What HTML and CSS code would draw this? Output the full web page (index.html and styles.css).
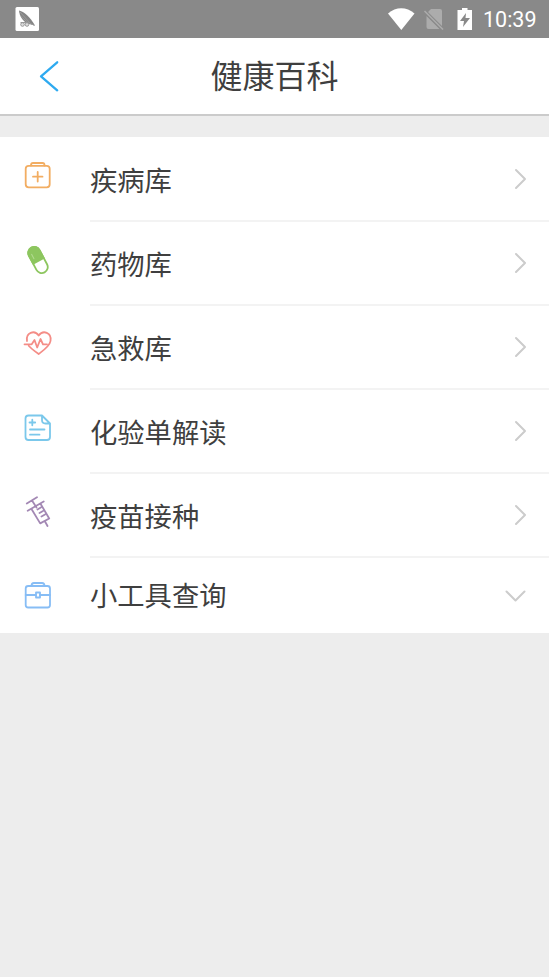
FILE: index.html
```html
<!DOCTYPE html>
<html lang="zh-CN">
<head>
<meta charset="utf-8">
<meta name="viewport" content="width=device-width, initial-scale=1">
<title>健康百科</title>
<link rel="stylesheet" href="styles.css">
</head>
<body>
<div class="status">
  <svg class="app-icon" width="24" height="24" viewBox="0 0 24 24"><rect x=".5" width="23.500" height="24" rx="1.500" fill="#fff"/><path d="M4 3.500C10 5 15 10 20 18.500L12 16.500C7 13 4.500 9 4 3.500Z" fill="#858585"/><path d="M5 5l10 11M5.500 9l8 7" stroke="#aaa" stroke-width=".6"/><g fill="#ddd" stroke="#999" stroke-width="1"><circle cx="7.500" cy="17.500" r="1.800"/><circle cx="12" cy="17.500" r="1.800"/><path d="M5.500 15.500h8l6 3" fill="none"/></g></svg>
  <div class="indicators">
    <svg width="92" height="38" viewBox="0 0 92 38">
      <path d="M0 13.500C8 6.500 18.500 6.500 26.500 13.500L13.300 30Z" fill="#fff"/>
      <path d="M43 9h9q2 0 2 2v15L40 12ZM38.500 16L51.500 29H40.500q-2 0-2-2Z" fill="#acacac"/>
      <path d="M36.500 11L55 29.500" stroke="#acacac" stroke-width="1.600"/>
      <path fill-rule="evenodd" d="M74 8H79.500v2h4.500v20H69.500V10h4.500ZM78 13L72 21H76L75 27L82 18H77.500Z" fill="#fff"/>
    </svg>
    <span class="clock">10:39</span>
  </div>
</div>
<header class="header">
  <svg class="back" width="24" height="34" viewBox="0 0 24 34"><path d="M20.200 3.300L4 17.300L20.200 31.300" fill="none" stroke="#2eaaf0" stroke-width="2.300" stroke-linecap="round" stroke-linejoin="round"/></svg>
  <h1>健康百科</h1>
</header>
<main class="list">
  <div class="row">
    <svg class="icon first" viewBox="0 0 50 45" stroke="#f2ad62"><rect x="10.700" y="10.800" width="24" height="21.500" rx="3"/><path d="M16 10.500V10q0-2 2-2h9.500q2 0 2 2v.500M22.700 17v9.500M18 21.700h9.500"/></svg>
    <div class="body"><span>疾病库</span><svg class="chevron" width="14" height="24" viewBox="0 0 14 24"><path d="M2 3l9 9-9 9"/></svg></div>
  </div>
  <div class="row">
    <svg class="icon" viewBox="0 0 50 45" stroke="#8dc65f"><g transform="rotate(-28 23 22)"><rect x="17" y="8" width="12" height="28" rx="6"/><path d="M17 23v-9a6 6 0 0 1 12 0V23Z" fill="#8dc65f"/><path d="M20 19v-5" stroke="#b2da91" stroke-width="1"/></g></svg>
    <div class="body"><span>药物库</span><svg class="chevron" width="14" height="24" viewBox="0 0 14 24"><path d="M2 3l9 9-9 9"/></svg></div>
  </div>
  <div class="row">
    <svg class="icon" viewBox="0 0 50 45" stroke="#f48d87"><path d="M12 19C10.500 10.500 19.500 7.500 23.700 13.500C28 7.500 37 10.500 35.500 19C34.800 24 29 28 23.700 32C19.500 29 16 26.500 13.700 23.700"/><path d="M9.500 22.300h7.200l2.800-4.300 2.700 7.500 3.300-8.500 2.500 5.300h4"/></svg>
    <div class="body"><span>急救库</span><svg class="chevron" width="14" height="24" viewBox="0 0 14 24"><path d="M2 3l9 9-9 9"/></svg></div>
  </div>
  <div class="row">
    <svg class="icon" viewBox="0 0 50 45" stroke="#7bc8eb"><path d="M27 9.500H13.500q-3 0-3 3V31q0 3 3 3H32q3 0 3-3V17.500L27 9.500V14q0 3.500 3.500 3.500H35M17.300 13.700v5.600M14.500 16.500h5.700M15 23.500h14.500M15 28.700h9.500"/></svg>
    <div class="body"><span>化验单解读</span><svg class="chevron" width="14" height="24" viewBox="0 0 14 24"><path d="M2 3l9 9-9 9"/></svg></div>
  </div>
  <div class="row">
    <svg class="icon" viewBox="0 0 50 45" stroke="#a388b4"><path d="M11.800 13.500L22 7.300M17 10.500l4.500 7M12.700 20.700L28.700 11.500M16.500 19L25.200 33.400 34.200 28.500 25.500 13.700M22.500 19.500l3.300-2M24.500 23l3.500-2M26.500 26.500l3.500-2M30 31.500l2.500 4.500"/></svg>
    <div class="body"><span>疫苗接种</span><svg class="chevron" width="14" height="24" viewBox="0 0 14 24"><path d="M2 3l9 9-9 9"/></svg></div>
  </div>
  <div class="row last">
    <svg class="icon" viewBox="0 0 50 45" stroke="#87bdf5"><rect x="10.700" y="14" width="24.300" height="21.500" rx="2.500"/><path d="M16.500 14q0-3 2.500-3h8q2.500 0 2.500 3M10.700 23h10M25 23h10"/><rect x="21" y="20.500" width="4" height="5"/></svg>
    <div class="body"><span>小工具查询</span><svg class="chevron down" width="24" height="14" viewBox="0 0 24 14"><path d="M2.500 2.500l9 9 9-9"/></svg></div>
  </div>
</main>
</body>
</html>
```
FILE: styles.css
```css
* { box-sizing: border-box; }
body {
  margin: 0;
  min-height: 977px;
  background: #ededed;
  color: #3f3f3f;
  font-family: "Noto Sans CJK SC", sans-serif;
}
svg { display: block; flex: none; }
.status {
  height: 38px;
  padding: 0 12px 0 15px;
  background: #898989;
  display: flex;
  align-items: center;
  justify-content: space-between;
}
.indicators { display: flex; align-items: center; }
.clock {
  width: 54px;
  margin-left: 3px;
  padding-top: 2px;
  color: #fff;
  font: 400 21.5px/36px Roboto, sans-serif;
  white-space: nowrap;
}
.header {
  height: 78px;
  padding: 0 37px;
  background: #fff;
  border-bottom: 2px solid #cbcbcb;
  display: grid;
  grid-template-columns: 24px 1fr 24px;
  align-items: center;
}
.header h1 {
  margin: 0;
  padding-bottom: 4px;
  font-size: 32px;
  font-weight: 400;
  line-height: 72px;
  text-align: center;
}
.list {
  margin-top: 21px;
  padding-top: 1px;
  background: #fff;
}
.row { height: 84px; display: flex; }
.icon {
  width: 50px;
  height: 45px;
  margin: 16px 25px 0 15px;
  fill: none;
  stroke-width: 1.8;
  stroke-linejoin: round;
  stroke-linecap: round;
}
.icon.first { margin-top: 17px; }
.body {
  flex: 1;
  padding: 0 21px 0 0;
  border-bottom: 2px solid #f3f3f3;
  display: flex;
  align-items: center;
  justify-content: space-between;
  font-size: 27.3px;
  line-height: 40px;
}
.chevron {
  fill: none;
  stroke: #cccccc;
  stroke-width: 2;
  stroke-linecap: round;
  stroke-linejoin: round;
}
.last { height: 75px; }
.last .icon { margin-top: 14px; }
.last .body { border-bottom: 0; }
.last .body span { padding-bottom: 3px; }
```
